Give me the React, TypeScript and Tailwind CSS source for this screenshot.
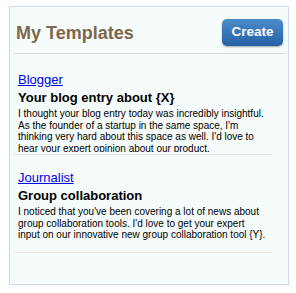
const TEMPLATES = [
  {
    kind: 'Blogger',
    title: 'Your blog entry about {X}',
    body: "I thought your blog entry today was incredibly insightful. As the founder of a startup in the same space, I'm thinking very hard about this space as well. I'd love to hear your expert opinion about our product.",
  },
  {
    kind: 'Journalist',
    title: 'Group collaboration',
    body: "I noticed that you've been covering a lot of news about group collaboration tools. I'd love to get your expert input on our innovative new group collaboration tool {Y}.",
  },
]

export default function App() {
  return (
    <div className="pt-[6px] pl-[9px] font-['Liberation_Sans',Arial,sans-serif] text-black">
      <div className="w-[280px] h-[279px] border border-[#cbdcf2] bg-[#f5fcfb]">
        <div className="flex items-center justify-between pl-[6px] pr-[5px] pt-[12px] pb-[7px]">
          <h1 className="text-[18px] leading-[22px] font-bold text-[#7d674b]">My Templates</h1>
          <button className="w-[61px] h-[27px] rounded-[5px] bg-gradient-to-b from-[#4b8dcc] to-[#2561a4] text-white text-[13.5px] font-bold shadow-[0_1px_2px_rgba(0,0,0,0.35)]">
            Create
          </button>
        </div>
        <div className="ml-[4px] mr-[3px] h-px bg-[#d9d9d9]" />
        <div className="pt-[18px]">
          {TEMPLATES.map((t, i) => (
            <div
              key={t.kind}
              className={`ml-[4px] w-[258px] pl-[4px] pb-[2px] border-b border-[#ebe7d3] ${i > 0 ? 'mt-[15px]' : ''}`}
            >
              <a href="#" className="block text-[13px] leading-[16px] text-[#0000ee] underline w-fit">
                {t.kind}
              </a>
              <div className="mt-[2px] text-[13px] leading-[16px] font-bold">{t.title}</div>
              <div className="mt-[2px] pr-[5px] h-[44px] overflow-hidden text-[10px] leading-[11.5px]">{t.body}</div>
            </div>
          ))}
        </div>
      </div>
    </div>
  )
}
